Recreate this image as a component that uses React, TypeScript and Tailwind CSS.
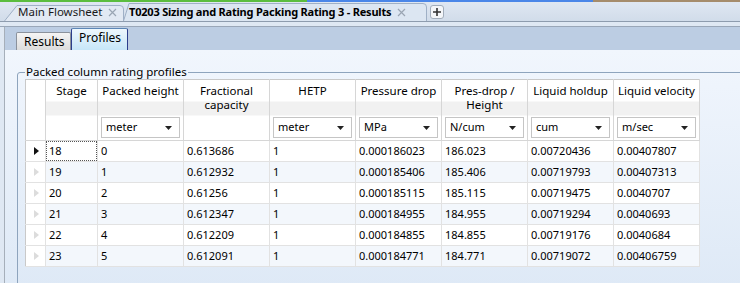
import React from 'react';

const cols = [
  { title: 'Stage', w: 52 },
  { title: 'Packed height', w: 86, unit: 'meter' },
  { title: 'Fractional capacity', w: 86 },
  { title: 'HETP', w: 86, unit: 'meter' },
  { title: 'Pressure drop', w: 86, unit: 'MPa' },
  { title: 'Pres-drop / Height', w: 86, unit: 'N/cum' },
  { title: 'Liquid holdup', w: 86, unit: 'cum' },
  { title: 'Liquid velocity', w: 86, unit: 'm/sec' },
];

const rows = [
  ['18', '0', '0.613686', '1', '0.000186023', '186.023', '0.00720436', '0.00407807'],
  ['19', '1', '0.612932', '1', '0.000185406', '185.406', '0.00719793', '0.00407313'],
  ['20', '2', '0.61256', '1', '0.000185115', '185.115', '0.00719475', '0.0040707'],
  ['21', '3', '0.612347', '1', '0.000184955', '184.955', '0.00719294', '0.0040693'],
  ['22', '4', '0.612209', '1', '0.000184855', '184.855', '0.00719176', '0.0040684'],
  ['23', '5', '0.612091', '1', '0.000184771', '184.771', '0.00719072', '0.00406759'],
];

const Close = () => (
  <svg width="9" height="9" viewBox="0 0 9 9" className="ml-[6px] shrink-0">
    <path d="M1 1L8 8M8 1L1 8" stroke="#9aa5b3" strokeWidth="1.2" />
  </svg>
);

const Tab = ({ w, active, children }: { w: number; active?: boolean; children: React.ReactNode }) => (
  <div className="relative h-[19px] flex items-center shrink-0" style={{ width: w }}>
    <svg className="absolute inset-0" width={w} height={19}>
      <path
        d={
          active
            ? `M0.5 19 L6 1.5 H${w - 4} Q${w - 0.5} 1.5 ${w - 0.5} 5 V19`
            : `M0.5 19 L13 3.5 H${w - 4} Q${w - 0.5} 3.5 ${w - 0.5} 7 V19`
        }
        fill={active ? '#dce6f2' : '#e2e9f3'}
        stroke="#9fb0c6"
      />
    </svg>
    <div className="relative flex items-center pl-[14px] pt-[1px] whitespace-nowrap">{children}</div>
  </div>
);

const Arrow = () => (
  <svg width="7" height="4" viewBox="0 0 7 4">
    <path d="M0 0H7L3.5 4Z" fill="#222" />
  </svg>
);

export default function App() {
  return (
    <div className="w-[740px] h-[283px] overflow-hidden flex flex-col bg-[#d3deec] font-['Noto_Sans',sans-serif] text-[11px] text-black">
      <div className="flex h-[2px] shrink-0">
        <div className="w-[307px] bg-[#5bbd3f]" />
        <div className="w-[286px] bg-[#4a86e8]" />
        <div className="flex-1 bg-[#a58c6c]" />
      </div>
      <div className="h-[19px] shrink-0 flex items-end pl-[4px] bg-gradient-to-b from-[#dfe7f2] to-[#d1dcea] text-[11.5px]">
        <Tab w={120}>
          <span className="text-[#1a1a1a]">Main Flowsheet</span>
          <Close />
        </Tab>
        <div className="-ml-[1px]">
          <Tab w={304} active>
            <span className="font-bold -ml-[8px] text-[11px] tracking-[-0.2px]">T0203 Sizing and Rating Packing Rating 3 - Results</span>
            <Close />
          </Tab>
        </div>
        <div className="ml-[3px] mb-[2px] w-[14px] h-[14px] rounded-[3px] border border-[#a2adbb] bg-[#f4f6f9] flex items-center justify-center">
          <svg width="10" height="10" viewBox="0 0 10 10">
            <path d="M5 1V9M1 5H9" stroke="#333" strokeWidth="1.6" />
          </svg>
        </div>
      </div>
      <div className="h-[6px] shrink-0 border-t border-[#8e9cae] bg-[#dfe8f3] border-b border-b-[#9aa7b8]" />
      <div className="flex-1 flex min-h-0">
        <div className="w-[5px] shrink-0 bg-[#dfe8f3] border-r border-[#a6afba]" />
        <div className="flex-1 flex flex-col min-w-0">
          <div className="h-[23px] shrink-0 bg-[#bccde3] flex items-end pl-[11px] text-[12px]">
            <div className="h-[18px] w-[55px] border border-b-0 border-[#8b929c] rounded-t-[2px] bg-gradient-to-b from-[#f5f5f5] to-[#dcdcdc] pl-[7px] leading-[17px]">
              Results
            </div>
            <div className="h-[22px] w-[57px] border border-b-0 border-x-[#2c3f8c] border-t-[#5d86b6] rounded-t-[2px] bg-gradient-to-b from-[#edf7fd] to-[#c6e6f8] pl-[7px] leading-[18px]">
              Profiles
            </div>
          </div>
          <div className="flex-1 bg-gradient-to-b from-[#f1f6fd] to-[#dbe7f5] pl-[12px] pt-[15px]">
            <fieldset className="w-[760px] h-[260px] border border-[#8ea4bd] rounded-tl-[3px] pl-[7px]">
              <legend className="ml-0 px-[1px] leading-[14px] text-[11.5px]">Packed column rating profiles</legend>
              <table className="border-collapse table-fixed border border-[#c9c9c9] bg-white">
                <colgroup>
                  <col style={{ width: 20 }} />
                  {cols.map((c) => (
                    <col key={c.title} style={{ width: c.w }} />
                  ))}
                </colgroup>
                <thead>
                  <tr>
                    <th className="h-[61px] p-0 border-r border-b border-[#d6d6d6] bg-white" />
                    {cols.map((c) => (
                      <th
                        key={c.title}
                        className="h-[61px] p-0 align-top font-normal border-r border-b border-[#d6d6d6] bg-[linear-gradient(to_bottom,#ffffff_0px,#ffffff_21px,#f1f1f1_21px,#f1f1f1_35px,#ffffff_35px)]"
                      >
                        <div className="h-[37px] pt-[4px] px-[3px] leading-[14px] text-center text-[11.5px]">{c.title}</div>
                        {c.unit && (
                          <div className="mx-[3px] h-[21px] border border-[#c5c5c5] bg-white flex items-center justify-between pl-[4px] pr-[7px] text-left">
                            <span>{c.unit}</span>
                            <Arrow />
                          </div>
                        )}
                      </th>
                    ))}
                  </tr>
                </thead>
                <tbody>
                  {rows.map((r, i) => (
                    <tr key={r[0]} className={i % 2 === 1 ? 'bg-[#f3f7fc]' : 'bg-white'}>
                      <td className="h-[21px] p-0 border-r border-b border-[#e2e2e2] bg-white">
                        <div className="flex items-center pl-[8px]">
                          <svg width="5" height="8" viewBox="0 0 5 8">
                            <path d="M0 0L5 4L0 8Z" fill={i === 0 ? '#111' : '#dcdcdc'} />
                          </svg>
                        </div>
                      </td>
                      {r.map((v, j) => (
                        <td key={j} className="h-[21px] p-0 border-r border-b border-[#e2e2e2]">
                          <div
                            className={`h-[20px] leading-[20px] pl-[3px] ${
                              i === 0 && j === 0 ? 'outline outline-1 outline-dotted outline-[#555] -outline-offset-1' : ''
                            }`}
                          >
                            {v}
                          </div>
                        </td>
                      ))}
                    </tr>
                  ))}
                </tbody>
              </table>
            </fieldset>
          </div>
        </div>
      </div>
    </div>
  );
}
